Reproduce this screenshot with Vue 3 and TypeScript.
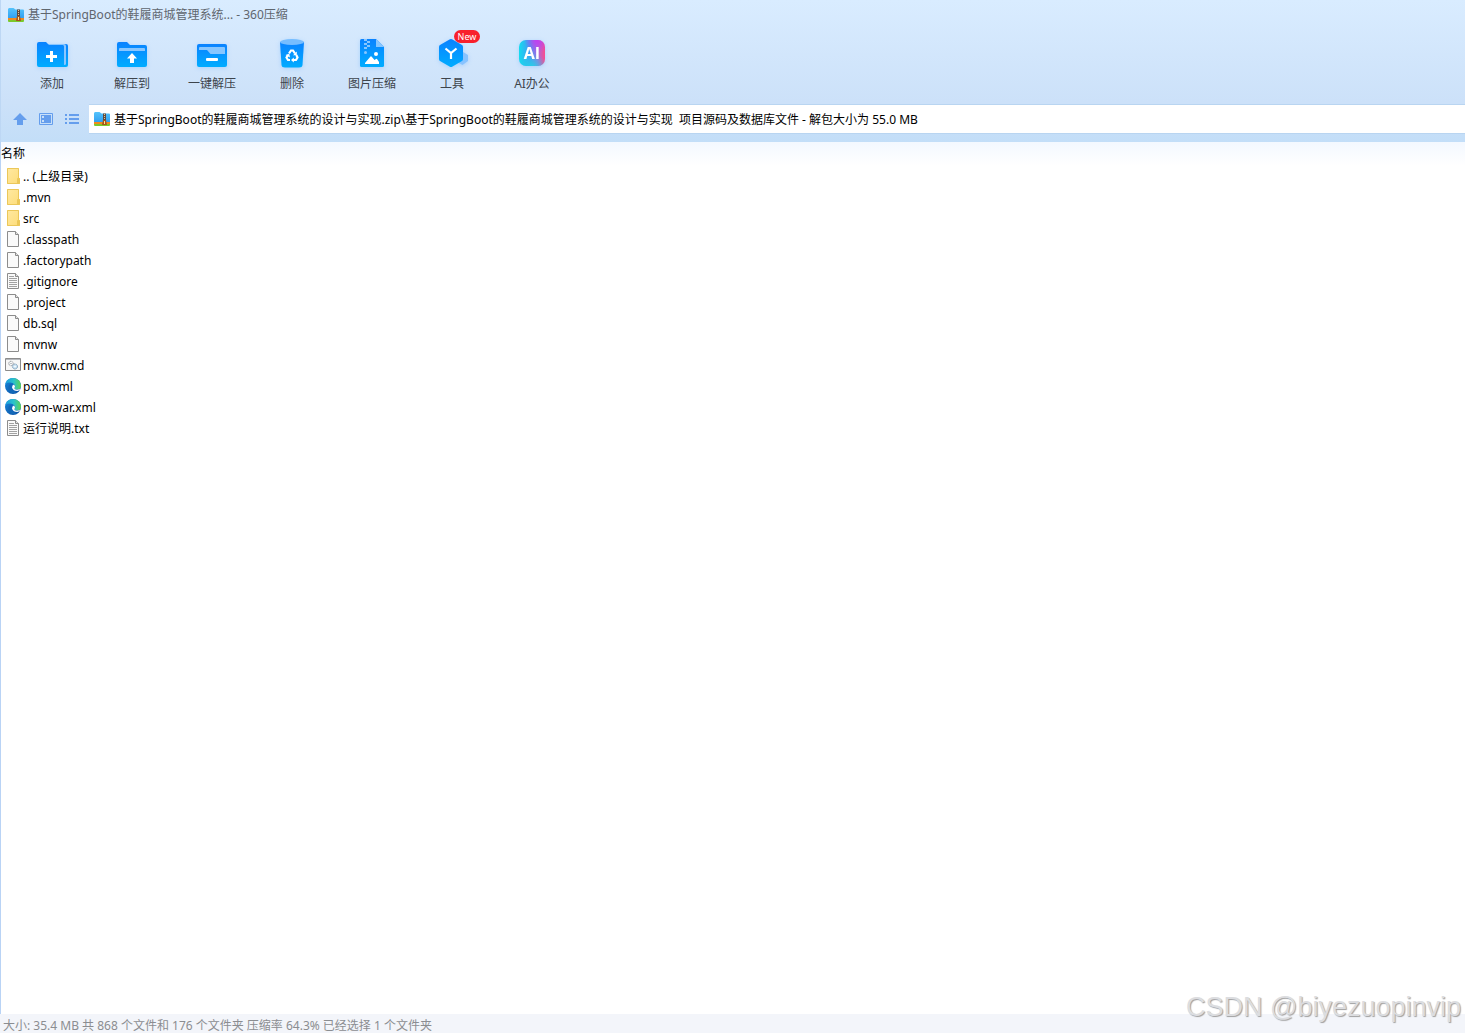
<script setup lang="ts">
import { ref } from 'vue'

type Kind = 'folder' | 'file' | 'text' | 'cmd' | 'edge'

interface Entry {
  name: string
  kind: Kind
}

const tools = [
  { id: 'add', label: '添加' },
  { id: 'extract', label: '解压到' },
  { id: 'quick', label: '一键解压' },
  { id: 'delete', label: '删除' },
  { id: 'image', label: '图片压缩' },
  { id: 'tools', label: '工具', badge: 'New' },
  { id: 'ai', label: 'AI办公' },
]

const entries: Entry[] = [
  { name: '.. (上级目录)', kind: 'folder' },
  { name: '.mvn', kind: 'folder' },
  { name: 'src', kind: 'folder' },
  { name: '.classpath', kind: 'file' },
  { name: '.factorypath', kind: 'file' },
  { name: '.gitignore', kind: 'text' },
  { name: '.project', kind: 'file' },
  { name: 'db.sql', kind: 'file' },
  { name: 'mvnw', kind: 'file' },
  { name: 'mvnw.cmd', kind: 'cmd' },
  { name: 'pom.xml', kind: 'edge' },
  { name: 'pom-war.xml', kind: 'edge' },
  { name: '运行说明.txt', kind: 'text' },
]

const path = ref(
  '基于SpringBoot的鞋履商城管理系统的设计与实现.zip\\基于SpringBoot的鞋履商城管理系统的设计与实现  项目源码及数据库文件 - 解包大小为 55.0 MB',
)
</script>

<template>
  <div class="window">
    <svg class="defs" width="0" height="0" aria-hidden="true">
      <defs>
        <linearGradient id="blue" x1="0" y1="0" x2="0" y2="1">
          <stop offset="0" stop-color="#0a82ff" />
          <stop offset="1" stop-color="#00acff" />
        </linearGradient>
        <linearGradient id="aiBase" x1="0" y1="0" x2="1" y2="0">
          <stop offset="0" stop-color="#14dcee" />
          <stop offset="0.4" stop-color="#3f9cf4" />
          <stop offset="0.7" stop-color="#a36ae4" />
          <stop offset="1" stop-color="#fa4c8c" />
        </linearGradient>
        <radialGradient id="aiTop" cx="0.7" cy="0" r="0.5">
          <stop offset="0" stop-color="#c23df0" />
          <stop offset="1" stop-color="#c23df0" stop-opacity="0" />
        </radialGradient>
        <radialGradient id="aiBottom" cx="0.5" cy="1.1" r="0.6">
          <stop offset="0" stop-color="#1fd8e6" />
          <stop offset="1" stop-color="#1fd8e6" stop-opacity="0" />
        </radialGradient>
        <linearGradient id="folder" x1="0" y1="0" x2="1" y2="1">
          <stop offset="0" stop-color="#ffe9a2" />
          <stop offset="1" stop-color="#fddc78" />
        </linearGradient>
        <linearGradient id="zipFace" x1="0" y1="0" x2="0" y2="1">
          <stop offset="0" stop-color="#55c3fb" />
          <stop offset="1" stop-color="#2e9df0" />
        </linearGradient>
        <linearGradient id="edgeTop" x1="0" y1="0" x2="1" y2="0">
          <stop offset="0" stop-color="#1b9de2" />
          <stop offset="0.55" stop-color="#2bc3c9" />
          <stop offset="1" stop-color="#5fd44f" />
        </linearGradient>
        <linearGradient id="edgeLow" x1="0" y1="0" x2="1" y2="1">
          <stop offset="0" stop-color="#1687dc" />
          <stop offset="1" stop-color="#0c4c9f" />
        </linearGradient>
        <symbol id="zip" viewBox="0 0 16 15">
          <path d="M0 1.500Q0 0 1.200 0H5.500L7.500 1.500H15Q16 1.500 16 2.500V11H0Z" fill="url(#zipFace)" />
          <path d="M0 10H16V12H0Z" fill="#f08a1e" />
          <path d="M0 12H16V13Q16 14 15 14H1Q0 14 0 13Z" fill="#7cc82c" />
          <path d="M9 1.500H12V8H9Z" fill="#5c4a42" />
          <path d="M10 2H11V3H10ZM10 4H11V5H10ZM10 6H11V7H10Z" fill="#e8c48a" />
          <path d="M9 8H12L13 13H8Z" fill="#a4551c" />
          <path d="M10 9H11V12H10Z" fill="#ffe08a" />
        </symbol>
      </defs>
    </svg>

    <header class="chrome">
      <div class="titlebar">
        <svg class="zip" aria-hidden="true"><use href="#zip" /></svg>
        <h1>基于SpringBoot的鞋履商城管理系统... - 360压缩</h1>
      </div>

      <nav class="toolbar" aria-label="工具栏">
        <button v-for="t in tools" :key="t.id" type="button" class="tool">
          <svg viewBox="0 0 32 32" class="glyph" aria-hidden="true">
            <template v-if="t.id === 'add'">
              <path d="M12 6H30Q32 6 32 8V27Q32 29 30 29H12Z" fill="url(#blue)" />
              <path d="M12 6H28Q30 6 30 8V26Q30 27 28 27V9Q28 7 26 7H12Z" fill="#8ac6ff" />
              <path d="M1 6Q1 4 3 4H10L13 7H26Q28 7 28 9V29H3Q1 29 1 27Z" fill="url(#blue)" />
              <path d="M15.500 13V24M10 18.500H21" stroke="#fff" stroke-width="3" />
            </template>
            <template v-else-if="t.id === 'extract'">
              <path d="M1 6Q1 4 3 4H11L14 7H29Q31 7 31 9V27Q31 29 29 29H3Q1 29 1 27Z" fill="url(#blue)" />
              <path d="M3 11Q3 10 4 10H28Q29 10 29 11V13H3Z" fill="#87c6ff" />
              <path d="M16 15L21 20.500H18V25H14V20.500H11Z" fill="#fff" />
            </template>
            <template v-else-if="t.id === 'quick'">
              <rect x="1" y="6" width="30" height="23" rx="2" fill="url(#blue)" />
              <path d="M3 10Q3 9 4 9H28Q29 9 29 10V16H14.500L11 12H3Z" fill="#87c6ff" />
              <rect x="10" y="20" width="12" height="3" rx="1" fill="#fff" />
            </template>
            <template v-else-if="t.id === 'delete'">
              <path d="M4 4H28L26.500 27Q26.300 29.500 23 29.500H9Q5.700 29.500 5.500 27Z" fill="url(#blue)" />
              <ellipse cx="16" cy="4" rx="12" ry="3" fill="#76bdff" />
              <g fill="none" stroke="#fff" stroke-width="2.200">
                <path d="M13 15.500L15 12.500H17L19 15.500" />
                <path d="M20.300 17L21.500 19.500L20 22H16.500" />
                <path d="M14 22H12L10.500 19.500L12 17" />
              </g>
              <path d="M20.800 13.500V17.300H17ZM17.800 19.500V24.500L15 22ZM9.500 17L13.300 15.800L14 19.500Z" fill="#fff" />
            </template>
            <template v-else-if="t.id === 'image'">
              <path d="M4 2.500Q4 1 5.500 1H20L28 9V27.500Q28 29 26.500 29H5.500Q4 29 4 27.500Z" fill="url(#blue)" />
              <path d="M20 1L28 9H20Z" fill="#87c6ff" />
              <path d="M8 1H11V3H8ZM11 3H14V5H11ZM8 5H11V7H8ZM11 7H14V9H11ZM8 9H11V11H8Z" fill="#87c6ff" />
              <circle cx="9.500" cy="14.500" r="1.500" fill="#87c6ff" />
              <circle cx="20" cy="16" r="2" fill="#fff" />
              <path d="M9 26V25L14.500 18.500Q15 18 15.500 18.500L18.500 22L20 21Q20.500 20.500 21 21L23 24V26Z" fill="#fff" />
            </template>
            <template v-else-if="t.id === 'tools'">
              <path d="M27 14L32 17V23L26.500 27L21 24V17Z" fill="#87c3ff" />
              <path d="M13.500 1.500Q15 .5 16.500 1.500L26 7Q27 7.500 27 9V21Q27 22.500 26 23L16.500 28.500Q15 29.500 13.500 28.500L4 23Q3 22.500 3 21V9Q3 7.500 4 7Z" fill="url(#blue)" />
              <path d="M9.500 10.500L15 15L20.500 10.500M15 15V21" fill="none" stroke="#fff" stroke-width="2.200" />
            </template>
            <template v-else>
              <rect x="3" y="2" width="26" height="26" rx="7" fill="url(#aiBase)" />
              <rect x="3" y="2" width="26" height="26" rx="7" fill="url(#aiTop)" />
              <rect x="3" y="2" width="26" height="26" rx="7" fill="url(#aiBottom)" />
              <text x="16" y="21" text-anchor="middle" class="ai">AI</text>
            </template>
          </svg>
          <span>{{ t.label }}</span>
          <em v-if="t.badge" class="badge">{{ t.badge }}</em>
        </button>
      </nav>

      <div class="addressbar">
        <div class="nav">
          <button type="button" aria-label="上级目录">
            <svg viewBox="0 0 14 14"><path d="M7 1L14 8H10V13H4V8H0Z" fill="#659eed" /></svg>
          </button>
          <button type="button" aria-label="预览">
            <svg viewBox="0 0 14 14">
              <path d="M.5 1.500H13.500V12.500H.5Z" fill="none" stroke="#659eed" />
              <path d="M2 3H12V11H2Z" fill="#659eed" />
              <path d="M3 4H5V6H3ZM3 8H5V10H3Z" fill="#c8dff8" />
            </svg>
          </button>
          <button type="button" aria-label="列表">
            <svg viewBox="0 0 14 14">
              <path d="M0 2H2V4H0ZM0 6H2V8H0ZM0 10H2V12H0ZM4 2H14V4H4ZM4 6H14V8H4ZM4 10H14V12H4Z" fill="#659eed" />
            </svg>
          </button>
        </div>
        <label class="address">
          <svg class="zip" aria-hidden="true"><use href="#zip" /></svg>
          <input v-model="path" type="text" aria-label="地址" spellcheck="false" />
        </label>
      </div>
    </header>

    <main class="listing">
      <table>
        <thead>
          <tr><th scope="col">名称</th></tr>
        </thead>
        <tbody>
          <tr v-for="e in entries" :key="e.name">
            <td>
              <div class="entry">
                <svg viewBox="0 0 16 16" class="type" aria-hidden="true">
                  <template v-if="e.kind === 'folder'">
                    <path d="M2 0H14V10H15V16H2Z" fill="url(#folder)" />
                    <path d="M2.500 .5H13.500V15.500H2.500ZM12.500 15.500V10.500H14.500V15.500Z" fill="none" stroke="#ebc759" />
                  </template>
                  <template v-else-if="e.kind === 'cmd'">
                    <path d="M.5 1.500H15.500V13.500H.5Z" fill="#f7f7f7" stroke="#8b8b8b" />
                    <path d="M1 2.500H15" stroke="#b5b8bc" />
                    <circle cx="6" cy="6.500" r="2.200" fill="#fff" stroke="#8f959b" stroke-dasharray="1.500 .5" />
                    <circle cx="10" cy="9.500" r="2.500" fill="#cce4f5" stroke="#7f9db5" stroke-dasharray="1.500 .5" />
                    <circle cx="6" cy="6.500" r=".7" fill="#8f959b" />
                    <circle cx="10" cy="9.500" r=".8" fill="#fff" />
                  </template>
                  <template v-else-if="e.kind === 'edge'">
                    <circle cx="8" cy="8" r="8" fill="url(#edgeLow)" />
                    <path d="M.3 6Q2 0 8 0Q15.500 .5 16 7.500Q16 11.500 12 11.500Q9 11.500 9.500 10Q11 8.500 9.500 6.500Q6 3 .3 6Z" fill="url(#edgeTop)" />
                    <path d="M3.500 8.500Q4 5.500 8 5.500Q5.500 7 6 10Q7 13.500 12 14Q9 16 6 14.500Q3 12 3.500 8.500Z" fill="#1268b8" />
                    <path d="M9.500 10Q9 11.500 12 11.700Q14.500 11.500 15.500 10.500Q14.500 12.700 12.500 13Q8 13 7 9.500Q7 7 9 6.500Q10.800 8.200 9.500 10Z" fill="#fff" />
                  </template>
                  <template v-else>
                    <path d="M2.500 .5H10.500L13.500 3.500V15.500H2.500Z" fill="#fafafa" stroke="#8c8c8c" />
                    <path d="M10.500 .5V3.500H13.500" fill="#e3e3e3" stroke="#8c8c8c" />
                    <path v-if="e.kind === 'text'" d="M4 3.500H9M4 5.500H12M4 7.500H12M4 9.500H12M4 11.500H12M4 13.500H12" stroke="#a2a2a2" />
                  </template>
                </svg>
                <span>{{ e.name }}</span>
              </div>
            </td>
          </tr>
        </tbody>
      </table>
    </main>

    <footer class="status">
      <span>大小: 35.4 MB 共 868 个文件和 176 个文件夹 压缩率 64.3% 已经选择 1 个文件夹</span>
    </footer>
    <div class="watermark">CSDN @biyezuopinvip</div>
  </div>
</template>

<style>
body {
  margin: 0;
}
</style>

<style scoped>
.window {
  position: relative;
  display: flex;
  flex-direction: column;
  min-height: 100vh;
  background: #fff;
  color: #000;
  font: 12px/16px "Noto Sans", "Noto Sans CJK SC", sans-serif;
}

.defs {
  position: absolute;
}

.chrome {
  padding-bottom: 8px;
  background: linear-gradient(#d9ecff, #cce1f9 72%, #c3def8);
  border-left: 1px solid #bdd7f4;
}

.titlebar {
  display: flex;
  align-items: center;
  gap: 4px;
  height: 30px;
  padding-left: 7px;
}

.titlebar h1 {
  margin: 0;
  color: #5f666e;
  font-size: 12px;
  font-weight: 400;
}

.zip {
  flex: none;
  width: 16px;
  height: 15px;
}

.toolbar {
  display: flex;
  padding: 8px 0 0 11px;
}

button {
  padding: 0;
  border: 0;
  background: none;
  color: inherit;
  font: inherit;
}

.tool {
  position: relative;
  display: flex;
  flex-direction: column;
  align-items: center;
  gap: 6px;
  width: 80px;
  height: 66px;
  color: #3d444c;
}

.glyph {
  width: 32px;
  height: 32px;
  filter: drop-shadow(0 1px 2px #3398ff40);
}

.ai {
  fill: #fff;
  font: 700 16px "Open Sans", sans-serif;
}

.badge {
  position: absolute;
  top: -8px;
  left: 42px;
  width: 26px;
  height: 13px;
  border-radius: 7px;
  background: #f8202c;
  color: #fff;
  font-size: 9px;
  font-style: normal;
  line-height: 13px;
  text-align: center;
}

.addressbar {
  display: flex;
  height: 30px;
}

.nav {
  display: flex;
  align-items: center;
  gap: 12px;
  padding: 0 10px 0 12px;
}

.nav svg {
  display: block;
  width: 14px;
  height: 14px;
}

.address {
  display: flex;
  flex: 1;
  align-items: center;
  gap: 4px;
  padding-left: 5px;
  border: solid #b9d5f1;
  border-width: 1px 0;
  background: #fff;
}

.address input {
  flex: 1;
  min-width: 0;
  padding: 2px 0 0;
  border: 0;
  outline: 0;
  background: none;
  color: #000;
  font: inherit;
}

.listing {
  flex: 1;
  border-left: 1px solid #b9d3f5;
  background: linear-gradient(#f3f8ff, #fff 24px);
}

table {
  width: 100%;
  border-collapse: collapse;
}

th {
  height: 24px;
  padding: 0;
  font-weight: 400;
  text-align: left;
}

td {
  padding: 0;
}

.entry {
  display: flex;
  align-items: flex-start;
  gap: 2px;
  height: 19px;
  padding: 2px 0 0 4px;
}

.entry span {
  line-height: 18px;
}

.type {
  width: 16px;
  height: 16px;
}

.status {
  display: flex;
  align-items: center;
  height: 19px;
  padding: 4px 3px 0;
  box-sizing: border-box;
  background: #f3f5fa;
  color: #8b8d91;
}

.watermark {
  position: absolute;
  right: 4px;
  bottom: 10px;
  color: #dcdde0;
  font: 27px/32px "Liberation Sans", sans-serif;
  text-shadow: 1px 1px 1px #a0a0a0;
}
</style>
